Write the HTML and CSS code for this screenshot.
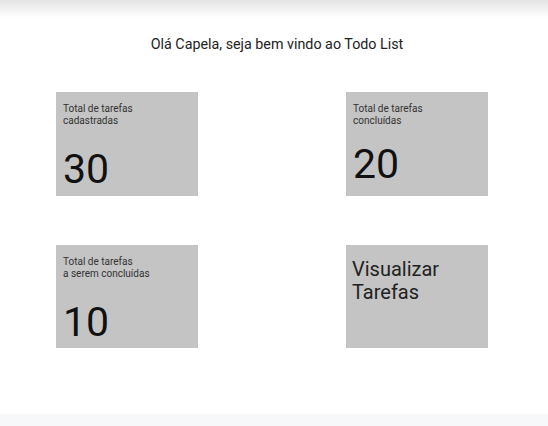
FILE: index.html
```html
<!DOCTYPE html>
<html lang="pt-BR">
<head>
<meta charset="utf-8">
<title>Todo List</title>
<link rel="stylesheet" href="styles.css">
</head>
<body>
<div class="page">
  <div class="topbar"></div>
  <main class="main">
    <h1 class="title">Olá Capela, seja bem vindo ao Todo List</h1>
    <div class="grid">
      <div class="card">
        <p class="label">Total de tarefas<br>cadastradas</p>
        <p class="count">30</p>
      </div>
      <div class="card">
        <p class="label">Total de tarefas<br>concluídas</p>
        <p class="count count-up">20</p>
      </div>
      <div class="card">
        <p class="label">Total de tarefas<br>a serem concluídas</p>
        <p class="count">10</p>
      </div>
      <a class="card card-link" href="#">Visualizar<br>Tarefas</a>
    </div>
  </main>
  <footer class="bottombar"></footer>
</div>
</body>
</html>
```
FILE: styles.css
```css
* { box-sizing: border-box; }
html, body { margin: 0; padding: 0; background: #ffffff; }
body { font-family: Roboto, "Noto Sans", Arial, sans-serif; color: #222; }
.page { width: 548px; height: 426px; display: flex; flex-direction: column; overflow: hidden; }
.topbar { height: 18px; background: linear-gradient(#e4e4e4, #ffffff); flex: none; }
.main { flex: 1; display: flex; flex-direction: column; }
.title {
  margin: 17px 0 0 0;
  font-size: 14.3px;
  line-height: 18px;
  font-weight: 400;
  color: #222;
  text-align: center;
  padding-left: 6px;
}
.grid {
  margin-top: 39px;
  padding-left: 56px;
  display: grid;
  grid-template-columns: 142px 142px;
  grid-template-rows: 104px 103px;
  column-gap: 148px;
  row-gap: 49px;
}
.card {
  background: #c4c4c4;
  padding: 11px 7px 0 7px;
  display: flex;
  flex-direction: column;
}
.label {
  margin: 0;
  font-size: 10px;
  line-height: 11.5px;
  color: #333;
}
.count {
  margin: 22px 0 0 0;
  font-size: 41px;
  line-height: 42px;
  color: #111;
}
.count-up { margin-top: 17px; }
.card-link {
  text-decoration: none;
  color: #222;
  font-size: 20px;
  line-height: 23px;
  padding-top: 13px;
  padding-left: 6px;
}
.bottombar { height: 12px; background: #f7f8fa; flex: none; }
```
